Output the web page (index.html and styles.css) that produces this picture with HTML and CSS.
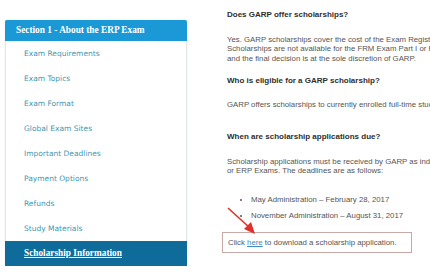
FILE: index.html
```html
<!DOCTYPE html>
<html lang="en">
<head>
    <meta charset="UTF-8">
    <title>ERP Exam - Scholarship Information</title>
    <link rel="stylesheet" href="styles.css">
</head>
<body>

    <div class="page">

        <!-- Menu lateral -->
        <div class="sidebar">
            <div class="sidebar-title">Section 1 - About the ERP Exam</div>
            <a class="side-link" href="#">Exam Requirements</a>
            <a class="side-link" href="#">Exam Topics</a>
            <a class="side-link" href="#">Exam Format</a>
            <a class="side-link" href="#">Global Exam Sites</a>
            <a class="side-link" href="#">Important Deadlines</a>
            <a class="side-link" href="#">Payment Options</a>
            <a class="side-link" href="#">Refunds</a>
            <a class="side-link" href="#">Study Materials</a>
            <a class="side-link active" href="#">Scholarship Information</a>
        </div>

        <!-- Conteudo -->
        <div class="content">
            <h3 class="q1">Does GARP offer scholarships?</h3>
            <p class="a1">Yes. GARP scholarships cover the cost of the Exam Registration fee.<br>
            Scholarships are not available for the FRM Exam Part I or Part II,<br>
            and the final decision is at the sole discretion of GARP.</p>

            <h3 class="q2">Who is eligible for a GARP scholarship?</h3>
            <p class="a2">GARP offers scholarships to currently enrolled full-time students.</p>

            <h3 class="q3">When are scholarship applications due?</h3>
            <p class="a3">Scholarship applications must be received by GARP as indicated for the FRM<br>
            or ERP Exams. The deadlines are as follows:</p>

            <ul class="dates">
                <li>May Administration &ndash; February 28, 2017</li>
                <li>November Administration &ndash; August 31, 2017</li>
            </ul>

            <div class="download-box">
                Click <a href="#">here</a> to download a scholarship application.
            </div>

            <!-- seta vermelha -->
            <svg class="arrow" width="34" height="32" viewBox="0 0 34 32">
                <line x1="1" y1="1" x2="23" y2="21" stroke="#e0302a" stroke-width="1.6"/>
                <polygon points="28,27 17,22 24,15" fill="#e0302a"/>
            </svg>
        </div>

    </div>

</body>
</html>
```

FILE: styles.css
```css
body {
    margin: 0;
    padding: 0;
    background: #ffffff;
    font-family: "Liberation Sans", Arial, sans-serif;
    overflow: hidden;
}

.page {
    display: flex;
    align-items: flex-start;
}

/* Menu lateral */
.sidebar {
    flex-shrink: 0;
    box-sizing: border-box;
    width: 182px;
    margin: 20px 0 0 5px;
    border: 1px solid #e2e6e8;
    border-top: none;
    box-shadow: 0 0 2px rgba(0, 0, 0, 0.08);
    display: flex;
    flex-direction: column;
}

.sidebar-title {
    height: 21px;
    line-height: 21px;
    margin: 0 -1px;
    padding-left: 11px;
    background-color: #1b99d6;
    color: #ffffff;
    font-family: "Liberation Serif", serif;
    font-weight: bold;
    font-size: 9.3px;
    border-radius: 2px 2px 0 0;
    white-space: nowrap;
}

.side-link {
    display: block;
    height: 25px;
    line-height: 25px;
    padding-left: 18px;
    color: #3f98b0;
    font-family: "DejaVu Sans", Verdana, sans-serif;
    font-size: 7.5px;
    text-decoration: none;
    white-space: nowrap;
}

.side-link.active {
    margin: 0 -1px -1px;
    padding-left: 19px;
    background-color: #0f6b99;
    color: #ffffff;
    font-family: "Liberation Serif", serif;
    font-weight: bold;
    font-size: 9.3px;
    text-decoration: underline;
}

/* Conteudo */
.content {
    position: relative;
    margin-left: 40px;
    padding-top: 10px;
    white-space: nowrap;
}

.content h3 {
    margin: 0;
    height: 10px;
    line-height: 10px;
    font-size: 8px;
    color: #2e2e2e;
}

.content p {
    margin: 0;
    font-size: 7.8px;
    line-height: 9.3px;
    color: #555555;
}

.a1 { margin-top: 15px !important; }
.q2 { margin-top: 13px !important; }
.a2 { margin-top: 14px !important; }
.q3 { margin-top: 23px !important; }
.a3 { margin-top: 15px !important; }

.dates {
    margin: 16px 0 0;
    padding-left: 24px;
    font-size: 7.8px;
    color: #555555;
}

.dates li {
    height: 16px;
    line-height: 16px;
}

.download-box {
    width: 183px;
    margin: 8px 0 0 -5px;
    padding: 0 0 0 5px;
    height: 19px;
    line-height: 19px;
    border: 1px solid #c9a9a6;
    font-size: 7.8px;
    color: #555555;
}

.download-box a {
    color: #3b8ec3;
}

.arrow {
    position: absolute;
    left: 0;
    top: 207px;
}
```
